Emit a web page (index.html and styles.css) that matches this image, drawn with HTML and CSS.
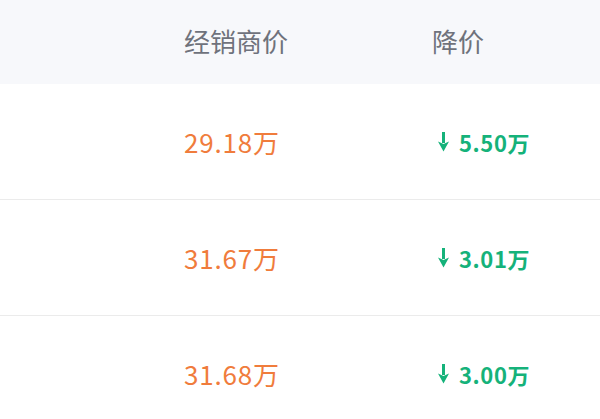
FILE: index.html
```html
<!DOCTYPE html>
<html lang="zh-CN">
<head>
  <meta charset="UTF-8">
  <title>经销商报价</title>
  <link rel="stylesheet" href="styles.css">
</head>
<body>
  <div class="price-table">
    <div class="row head">
      <div class="cell name"></div>
      <div class="cell">经销商价</div>
      <div class="cell">降价</div>
    </div>
    <div class="row">
      <div class="cell name"></div>
      <div class="cell price">29.18万</div>
      <div class="cell cut"><svg class="arrow" viewBox="0 0 11 21"><path d="M4 1h3v11h-3z M0 10.5l5.5 2.5 5.5-2.5-5.5 10z"/></svg>5.50万</div>
    </div>
    <div class="row">
      <div class="cell name"></div>
      <div class="cell price">31.67万</div>
      <div class="cell cut"><svg class="arrow" viewBox="0 0 11 21"><path d="M4 1h3v11h-3z M0 10.5l5.5 2.5 5.5-2.5-5.5 10z"/></svg>3.01万</div>
    </div>
    <div class="row">
      <div class="cell name"></div>
      <div class="cell price">31.68万</div>
      <div class="cell cut"><svg class="arrow" viewBox="0 0 11 21"><path d="M4 1h3v11h-3z M0 10.5l5.5 2.5 5.5-2.5-5.5 10z"/></svg>3.00万</div>
    </div>
  </div>
</body>
</html>
```

FILE: styles.css
```css
/* Общие */
body {
    margin: 0;
    background: #fff;
    font-family: "Noto Sans CJK SC", "Noto Sans", sans-serif;
}

.price-table {
    width: 600px;
}

.row {
    display: grid;
    grid-template-columns: 184px 248px 1fr;
    align-items: center;
    height: 115px;
    border-bottom: 1px solid #ebebeb;
}

.row.head {
    height: 80px;
    padding-bottom: 4px;
    background: #f7f8fb;
    border-bottom: none;
    font-size: 26px;
    color: #6f727c;
}

.price {
    font-size: 26px;
    letter-spacing: 0.8px;
    color: #f07c3c;
}

/* Снижение цены */
.cut {
    display: flex;
    align-items: center;
    gap: 10px;
    padding-left: 6px;
    font-size: 22px;
    font-weight: 700;
    letter-spacing: 0.6px;
    color: #15b27a;
}

.arrow {
    flex: none;
    width: 11px;
    height: 21px;
    fill: #15b27a;
}
```
